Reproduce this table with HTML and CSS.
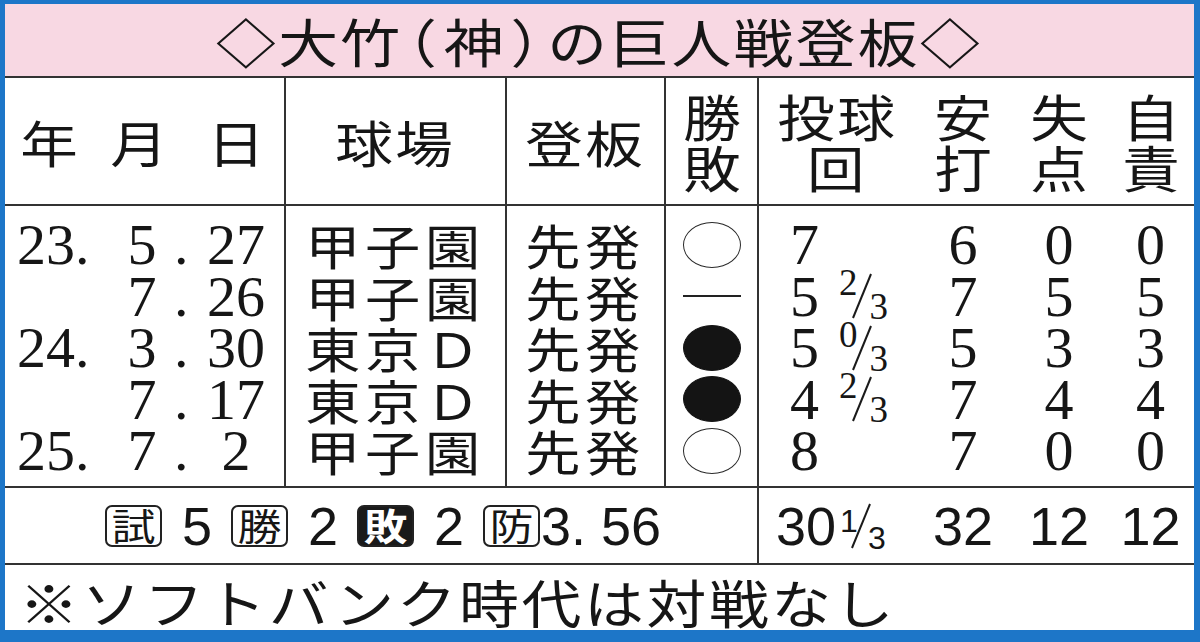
FILE: index.html
```html
<!DOCTYPE html>
<html lang="ja">
<head>
<meta charset="utf-8">
<title>大竹（神）の巨人戦登板</title>
<link rel="stylesheet" href="styles.css">
</head>
<body>
<div class="board">
  <div class="title"><span class="w">◇大竹<span class="p">（</span>神<span class="p">）</span>の巨人戦登板◇</span></div>

  <div class="grid head">
    <div class="date-h"><span class="w">年</span><span class="w m">月</span><span class="w d">日</span></div>
    <div class="pair"><span class="w">球場</span></div>
    <div class="pair"><span class="w">登板</span></div>
    <div><span class="w">勝</span><span class="w">敗</span></div>
    <div class="pair"><span class="w">投球</span><span class="w">回</span></div>
    <div><span class="w">安</span><span class="w">打</span></div>
    <div><span class="w">失</span><span class="w">点</span></div>
    <div><span class="w">自</span><span class="w">責</span></div>
  </div>

  <div class="grid body">
    <div class="date num"><span class="y">23.</span><span class="mo">5</span><span class="dot">.</span><span class="dy">27</span></div>
    <div class="kan"><span class="w">甲子園</span></div>
    <div class="kan"><span class="w">先発</span></div>
    <div class="wl"><span class="mark"></span></div>
    <div class="ip num">7</div>
    <div class="st num">6</div>
    <div class="st num">0</div>
    <div class="st num">0</div>

    <div class="date num"><span class="y"></span><span class="mo">7</span><span class="dot">.</span><span class="dy">26</span></div>
    <div class="kan"><span class="w">甲子園</span></div>
    <div class="kan"><span class="w">先発</span></div>
    <div class="wl"><span class="dash"></span></div>
    <div class="ip num">5<span class="fr"><span class="up">2</span><svg class="sl" viewBox="0 0 24 46" width="24" height="46"><line x1="3" y1="45" x2="21" y2="1"/></svg><span class="dn">3</span></span></div>
    <div class="st num">7</div>
    <div class="st num">5</div>
    <div class="st num">5</div>

    <div class="date num"><span class="y">24.</span><span class="mo">3</span><span class="dot">.</span><span class="dy">30</span></div>
    <div class="kan"><span class="w">東京Ｄ</span></div>
    <div class="kan"><span class="w">先発</span></div>
    <div class="wl"><span class="mark lose"></span></div>
    <div class="ip num">5<span class="fr"><span class="up">0</span><svg class="sl" viewBox="0 0 24 46" width="24" height="46"><line x1="3" y1="45" x2="21" y2="1"/></svg><span class="dn">3</span></span></div>
    <div class="st num">5</div>
    <div class="st num">3</div>
    <div class="st num">3</div>

    <div class="date num"><span class="y"></span><span class="mo">7</span><span class="dot">.</span><span class="dy">17</span></div>
    <div class="kan"><span class="w">東京Ｄ</span></div>
    <div class="kan"><span class="w">先発</span></div>
    <div class="wl"><span class="mark lose"></span></div>
    <div class="ip num">4<span class="fr"><span class="up">2</span><svg class="sl" viewBox="0 0 24 46" width="24" height="46"><line x1="3" y1="45" x2="21" y2="1"/></svg><span class="dn">3</span></span></div>
    <div class="st num">7</div>
    <div class="st num">4</div>
    <div class="st num">4</div>

    <div class="date num"><span class="y">25.</span><span class="mo">7</span><span class="dot">.</span><span class="dy">2</span></div>
    <div class="kan"><span class="w">甲子園</span></div>
    <div class="kan"><span class="w">先発</span></div>
    <div class="wl"><span class="mark"></span></div>
    <div class="ip num">8</div>
    <div class="st num">7</div>
    <div class="st num">0</div>
    <div class="st num">0</div>
  </div>

  <div class="grid total">
    <div class="sum sans">
      <span class="box"><span class="bw">試</span></span><span class="n">5</span><span class="box"><span class="bw">勝</span></span><span class="n">2</span><span class="box inv"><span class="bw">敗</span></span><span class="n">2</span><span class="box"><span class="bw">防</span></span><span class="era">3. 56</span>
    </div>
    <div class="tip sans">30<span class="fr"><span class="up">1</span><svg class="sl" viewBox="0 0 24 46" width="24" height="46"><line x1="3" y1="45" x2="21" y2="1"/></svg><span class="dn">3</span></span></div>
    <div class="st sans">32</div>
    <div class="st sans">12</div>
    <div class="st sans">12</div>
  </div>

  <div class="note"><span class="w">※ソフトバンク時代は対戦なし</span></div>
</div>
</body>
</html>
```

FILE: styles.css
```css
* { box-sizing: border-box; margin: 0; padding: 0; }

html, body {
  width: 1200px;
  height: 642px;
  overflow: hidden;
  background: #ffffff;
}

body {
  font-family: "Noto Sans CJK JP", "Noto Sans", sans-serif;
  color: #161616;
}

.board {
  width: 1200px;
  height: 642px;
  border-style: solid;
  border-color: #1d76c8;
  border-width: 4px 6px 12px 5px;
  display: flex;
  flex-direction: column;
}

.w {
  display: inline-block;
  transform: scaleX(1.15);
  white-space: nowrap;
}

/* title band */
.title {
  flex: 0 0 74px;
  background: #f8d8e3;
  border-bottom: 2px solid #333;
  display: flex;
  align-items: center;
  justify-content: center;
  font-size: 52px;
  line-height: 1;
  letter-spacing: 2px;
  padding-top: 2px;
}
.title .p {
  font-feature-settings: "halt";
  margin: 0 4px;
}

/* shared column grid */
.grid {
  display: grid;
  grid-template-columns: 281px 221px 159px 93px 156px 96px 96px 87px;
  border-bottom: 2px solid #333;
}

/* header row */
.head {
  flex: 0 0 128px;
  font-size: 50px;
  line-height: 51px;
}
.head > div {
  display: flex;
  flex-direction: column;
  align-items: center;
  justify-content: center;
}
.head > div:nth-child(-n+4) { border-right: 2px solid #333; }
.head > .date-h {
  flex-direction: row;
  justify-content: flex-start;
  padding-left: 19px;
}
.date-h .m { margin-left: 40px; }
.date-h .d { margin-left: 47px; }
.head > .pair { letter-spacing: 2.2px; }

/* body rows */
.body {
  flex: 0 0 282px;
  grid-template-rows: 64.5px 51.5px 51.5px 51.5px 61px;
  line-height: 51.5px;
}
.body > div {
  display: flex;
  align-items: center;
  white-space: nowrap;
}
.body > div:nth-child(8n+1),
.body > div:nth-child(8n+2),
.body > div:nth-child(8n+3),
.body > div:nth-child(8n+4) { border-right: 2px solid #333; }
.body > div:nth-child(-n+8) { padding-top: 13px; }
.body > div:nth-last-child(-n+8) { padding-bottom: 9.5px; }

.num {
  font-family: "Liberation Serif", serif;
  font-size: 58px;
}

.date span { display: inline-block; text-align: center; }
.date .y { width: 105px; padding-left: 12px; text-align: left; }
.date .mo { width: 64px; }
.date .dot { width: 14px; }
.date .dy { width: 96px; }

.kan {
  justify-content: center;
  font-size: 48px;
  letter-spacing: 4px;
}

.wl { justify-content: center; }
.mark {
  display: block;
  width: 58px;
  height: 46px;
  border: 1.6px solid #2a2a2a;
  border-radius: 50%;
}
.mark.lose { background: #141414; border-color: #141414; }
.dash {
  display: block;
  width: 58px;
  height: 2px;
  background: #222;
}

.ip { padding-left: 31px; }
.st { justify-content: center; }

/* fractions */
.fr { display: inline-block; line-height: 0; margin-left: 20px; }
.fr .up, .fr .dn { font-size: 37px; line-height: 0; display: inline-block; }
.fr .up { vertical-align: 21px; }
.fr .dn { vertical-align: -3px; margin-left: -4px; }
.fr .sl {
  vertical-align: -3px;
  margin-left: -8px;
  stroke: #1a1a1a;
  stroke-width: 2;
  fill: none;
}

/* totals row */
.total { flex: 0 0 77px; }
.total > div {
  display: flex;
  align-items: center;
  white-space: nowrap;
}
.sans {
  font-family: "Liberation Sans", sans-serif;
  font-size: 54px;
  line-height: 1;
}
.sum {
  grid-column: 1 / 5;
  border-right: 2px solid #333;
  justify-content: center;
  padding-left: 4px;
}
.box {
  display: inline-flex;
  align-items: center;
  justify-content: center;
  width: 57px;
  height: 42px;
  border: 2px solid #222;
  border-radius: 7px;
  font-family: "Noto Sans CJK JP", sans-serif;
  font-size: 37px;
  line-height: 1;
}
.box .bw { display: inline-block; transform: scaleX(1.18); }
.box.inv {
  background: #1a1a1a;
  color: #fff;
  font-weight: 700;
}
.n { margin: 0 19px 0 20px; }
.era { margin-left: 1px; }
.tip { padding-left: 17px; }
.tip .fr { margin-left: 4px; }
.tip .fr .up, .tip .fr .dn { font-size: 32px; }
.tip .fr .up { vertical-align: 17px; }
.tip .fr .dn { vertical-align: 0; margin-left: -5px; }
.tip .fr .sl { vertical-align: 0; margin-left: -9px; }

/* note row */
.note {
  flex: 1 1 auto;
  display: flex;
  align-items: center;
  padding: 8px 0 0 14px;
  font-size: 52px;
  line-height: 1;
  letter-spacing: 2.3px;
}
.note .w { transform-origin: left center; }
```
